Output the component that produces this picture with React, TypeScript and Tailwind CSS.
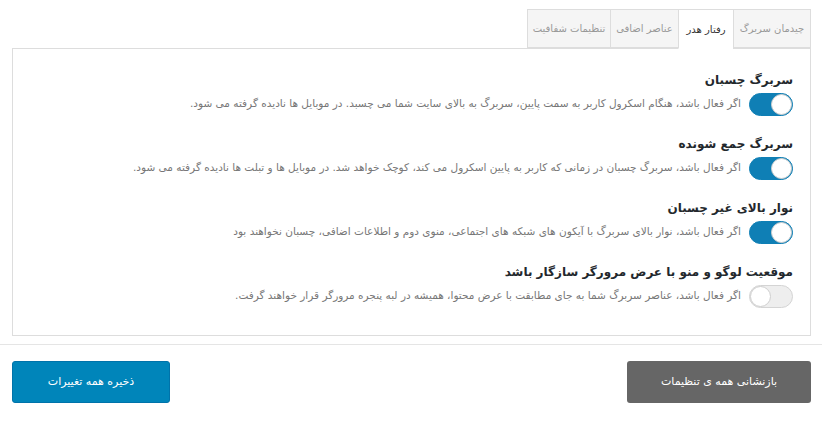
import { useState } from "react";

interface HeaderOption {
  id: string;
  title: string;
  description: string;
  enabled: boolean;
}

const tabs = [
  { id: "layout", label: "چیدمان سربرگ", width: "w-[78px]" },
  { id: "behavior", label: "رفتار هدر", width: "w-[55px]" },
  { id: "extra", label: "عناصر اضافی", width: "w-[68px]" },
  { id: "transparency", label: "تنظیمات شفافیت", width: "w-[83px]" },
];

const initialOptions: HeaderOption[] = [
  {
    id: "sticky",
    title: "سربرگ چسبان",
    description:
      "اگر فعال باشد، هنگام اسکرول کاربر به سمت پایین، سربرگ به بالای سایت شما می چسبد. در موبایل ها نادیده گرفته می شود.",
    enabled: true,
  },
  {
    id: "shrink",
    title: "سربرگ جمع شونده",
    description:
      "اگر فعال باشد، سربرگ چسبان در زمانی که کاربر به پایین اسکرول می کند، کوچک خواهد شد. در موبایل ها و تبلت ها نادیده گرفته می شود.",
    enabled: true,
  },
  {
    id: "topbar",
    title: "نوار بالای غیر چسبان",
    description:
      "اگر فعال باشد، نوار بالای سربرگ با آیکون های شبکه های اجتماعی، منوی دوم و اطلاعات اضافی، چسبان نخواهند بود",
    enabled: true,
  },
  {
    id: "fullwidth",
    title: "موقعیت لوگو و منو با عرض مرورگر سازگار باشد",
    description:
      "اگر فعال باشد، عناصر سربرگ شما به جای مطابقت با عرض محتوا، همیشه در لبه پنجره مرورگر قرار خواهند گرفت.",
    enabled: false,
  },
];

function Toggle({ on, onChange }: { on: boolean; onChange: () => void }) {
  return (
    <button
      onClick={onChange}
      className={
        on
          ? "relative shrink-0 w-[44px] h-[23px] rounded-full bg-[#0f7fb5] border border-[#0f7fb5]"
          : "relative shrink-0 w-[44px] h-[23px] rounded-full bg-[#eeeeee] border border-[#d4d4d4]"
      }
    >
      <span
        className={
          on
            ? "absolute top-[0px] right-[0px] w-[21px] h-[21px] rounded-full bg-white border border-[#cfcfcf]"
            : "absolute top-[0px] left-[0px] w-[21px] h-[21px] rounded-full bg-white border border-[#cfcfcf]"
        }
      />
    </button>
  );
}

export default function App() {
  const [activeTab, setActiveTab] = useState("behavior");
  const [options, setOptions] = useState<HeaderOption[]>(initialOptions);

  const toggle = (id: string) =>
    setOptions(prev => prev.map(o => (o.id === id ? { ...o, enabled: !o.enabled } : o)));

  return (
    <div
      dir="rtl"
      className="w-[822px] h-[429px] bg-white overflow-hidden"
      style={{ fontFamily: "Tahoma, 'DejaVu Sans', sans-serif" }}
    >
      {/* Tabs */}
      <div className="flex pt-[9px] pr-[11px]">
        {tabs.map(tab => {
          const active = tab.id === activeTab;
          return (
            <button
              key={tab.id}
              onClick={() => setActiveTab(tab.id)}
              className={
                active
                  ? `${tab.width} h-[40px] -mb-px relative z-10 bg-white border border-[#dddddd] border-b-white border-r-0 text-[10px] text-[#333333] flex items-center justify-center whitespace-nowrap`
                  : `${tab.width} h-[39px] bg-[#f5f5f5] border border-[#dddddd] border-r-0 first:border-r text-[10px] text-[#999999] flex items-center justify-center whitespace-nowrap`
              }
            >
              {tab.label}
            </button>
          );
        })}
      </div>

      {/* Panel */}
      <div className="mr-[11px] ml-[12px] h-[288px] border border-[#dddddd] pt-[20px] pr-[17px] pl-[16px]">
        <div className="flex flex-col">
          {options.map(opt => (
            <div key={opt.id} className="h-[64px]">
              <div className="h-[22px] flex items-center text-[12px] font-bold text-[#23282d]">
                {opt.title}
              </div>
              <div className="flex items-center gap-[8px] h-[24px] mt-[1px]">
                <Toggle on={opt.enabled} onChange={() => toggle(opt.id)} />
                <p className="text-[10.5px] text-[#777777] whitespace-nowrap">{opt.description}</p>
              </div>
            </div>
          ))}
        </div>
      </div>

      {/* Footer */}
      <div className="mt-[8px] border-t border-[#e5e5e5]" />
      <div className="flex justify-between pt-[16px] pr-[11px] pl-[12px]">
        <button className="w-[184px] h-[42px] rounded-[3px] bg-[#666666] text-white text-[11px]">
          بازنشانی همه ی تنظیمات
        </button>
        <button className="w-[158px] h-[42px] rounded-[3px] bg-[#0085ba] border border-[#0073aa] text-white text-[11px]">
          ذخیره همه تغییرات
        </button>
      </div>
    </div>
  );
}
